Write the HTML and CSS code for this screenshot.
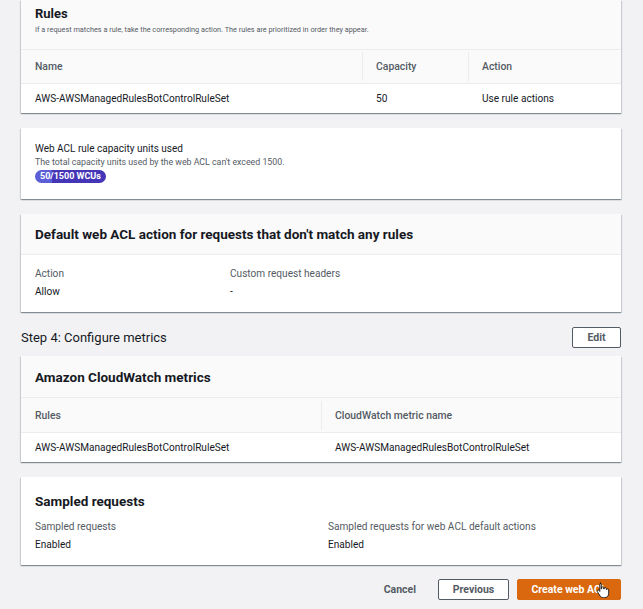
FILE: index.html
```html
<!DOCTYPE html>
<html lang="en">
<head>
<meta charset="utf-8">
<title>Review and create web ACL</title>
<link rel="stylesheet" href="styles.css">
</head>
<body>
<main class="page">
  <section class="card card-first">
    <header class="card-header">
      <h2 class="title">Rules</h2>
      <p class="desc">If a request matches a rule, take the corresponding action. The rules are prioritized in order they appear.</p>
    </header>
    <div class="table">
      <div class="row head rules-cols">
        <div class="cell">Name</div>
        <div class="cell sep">Capacity</div>
        <div class="cell sep">Action</div>
      </div>
      <div class="row rules-cols">
        <div class="cell">AWS-AWSManagedRulesBotControlRuleSet</div>
        <div class="cell">50</div>
        <div class="cell">Use rule actions</div>
      </div>
    </div>
  </section>

  <section class="card wcu">
    <div class="wcu-title">Web ACL rule capacity units used</div>
    <div class="wcu-desc">The total capacity units used by the web ACL can't exceed 1500.</div>
    <span class="badge">50/1500 WCUs</span>
  </section>

  <section class="card">
    <header class="card-header simple short">
      <h2 class="title big">Default web ACL action for requests that don't match any rules</h2>
    </header>
    <div class="kv two-def">
      <div class="kv-item">
        <div class="label">Action</div>
        <div class="value">Allow</div>
      </div>
      <div class="kv-item">
        <div class="label">Custom request headers</div>
        <div class="value">-</div>
      </div>
    </div>
  </section>

  <div class="step">
    <h3 class="step-title">Step 4: Configure metrics</h3>
    <button class="btn btn-normal">Edit</button>
  </div>

  <section class="card">
    <header class="card-header simple">
      <h2 class="title big">Amazon CloudWatch metrics</h2>
    </header>
    <div class="table">
      <div class="row head tall cw-cols">
        <div class="cell">Rules</div>
        <div class="cell sep">CloudWatch metric name</div>
      </div>
      <div class="row cw-cols">
        <div class="cell">AWS-AWSManagedRulesBotControlRuleSet</div>
        <div class="cell">AWS-AWSManagedRulesBotControlRuleSet</div>
      </div>
    </div>
  </section>

  <section class="card sampled">
    <h2 class="title big">Sampled requests</h2>
    <div class="kv two-half">
      <div class="kv-item">
        <div class="label">Sampled requests</div>
        <div class="value">Enabled</div>
      </div>
      <div class="kv-item">
        <div class="label">Sampled requests for web ACL default actions</div>
        <div class="value">Enabled</div>
      </div>
    </div>
  </section>

  <div class="actions">
    <button class="btn btn-link">Cancel</button>
    <button class="btn btn-normal">Previous</button>
    <button class="btn btn-primary">Create web ACL
      <svg class="cursor" width="14" height="16" viewBox="0 0 14 16" aria-hidden="true">
        <path d="M4 1.2c.7 0 1.2.5 1.2 1.2V7l.4-.1V5.8c0-.6.5-1 1.1-1s1.1.4 1.1 1V7l.3.1v-.6c0-.6.5-1 1.1-1s1.1.4 1.1 1v1l.3.1c.1-.4.5-.7 1-.7.6 0 1.1.5 1.1 1.1v3.4c0 2.5-1.800 4.3-4.2 4.3H7.2c-1.3 0-2.3-.6-3-1.6L1.3 9.6c-.3-.5-.2-1.1.3-1.4.5-.3 1.1-.2 1.4.2l.8 1.1V2.4c0-.7.5-1.2 1.2-1.200z" fill="#fff" stroke="#111" stroke-width="0.9" stroke-linejoin="round"/>
      </svg>
    </button>
  </div>
</main>
</body>
</html>
```
FILE: styles.css
```css
* { box-sizing: border-box; }
html, body { margin: 0; padding: 0; }
body {
  background: #f2f2f4;
  font-family: Roboto, "Liberation Sans", Arial, sans-serif;
  color: #16191f;
  font-size: 10.1px;
}
.page {
  width: 600px;
  margin-left: 21px;
  display: flex;
  flex-direction: column;
}
.card {
  background: #fff;
  box-shadow: 0 1px 1px rgba(0, 28, 36, 0.3), 1px 1px 1px rgba(0, 28, 36, 0.12), -1px 1px 1px rgba(0, 28, 36, 0.12);
  margin-bottom: 15px;
}
.card-header {
  background: #fafafb;
  border-bottom: 1px solid #eaeded;
}
.card-first .card-header {
  padding: 5px 14px 0;
  height: 50px;
}
.title {
  margin: 0;
  font-size: 13px;
  font-weight: 700;
  line-height: 18px;
}
.title.big { font-size: 13.5px; }
.desc {
  margin: 0;
  font-size: 7.3px;
  line-height: 14px;
  color: #545b64;
}
.card-header.simple {
  height: 42px;
  padding: 0 14px;
  display: flex;
  align-items: center;
}
.card-header.simple.short { height: 41px; }
.table { display: flex; flex-direction: column; }
.row { display: grid; align-items: center; }
.rules-cols { grid-template-columns: 341px 106px 1fr; }
.cw-cols { grid-template-columns: 300px 1fr; }
.row.head {
  height: 34px;
  background: #fafafb;
  border-bottom: 1px solid #eaeded;
  font-weight: 500;
  font-size: 10.4px;
  color: #545b64;
}
.row.head.tall { height: 35px; }
.row:not(.head) { height: 29px; }
.cell { padding: 0 14px; white-space: nowrap; }
.cell.sep { position: relative; }
.cell.sep::before {
  content: "";
  position: absolute;
  left: 0;
  top: -8px;
  bottom: -8px;
  border-left: 1px solid #eaeded;
}
.wcu {
  padding: 14px 14px 15px;
  height: 71px;
}
.wcu-title { font-size: 10px; line-height: 14px; }
.wcu-desc { font-size: 8.8px; line-height: 12px; color: #545b64; }
.badge {
  display: inline-block;
  margin-top: 2px;
  height: 13px;
  line-height: 13px;
  padding: 0 5px;
  border-radius: 7px;
  font-size: 9px;
  font-weight: 700;
  color: #fff;
  background: linear-gradient(to right, #5b5ed6 0 24%, #4436b6 24%);
}
.kv {
  display: grid;
  padding: 10px 14px 11px;
}
.two-def { grid-template-columns: 195px 1fr; }
.two-half { grid-template-columns: 293px 1fr; padding: 8px 0 10px; }
.label { color: #545b64; line-height: 18px; }
.value { line-height: 18px; }
.step {
  display: flex;
  align-items: center;
  justify-content: space-between;
  height: 21px;
  margin: 0 0 8px;
}
.step-title {
  margin: 0;
  font-size: 13px;
  font-weight: 400;
}
.btn {
  font-family: inherit;
  font-weight: 700;
  font-size: 10.5px;
  height: 21px;
  border-radius: 2px;
  padding: 0 12px;
  cursor: pointer;
}
.btn-normal {
  background: #fff;
  color: #545b64;
  border: 1px solid #545b64;
}
.step .btn-normal { width: 49px; padding: 0; }
.sampled {
  padding: 15px 14px 10px;
  height: 88px;
}
.actions {
  display: flex;
  justify-content: flex-end;
  align-items: center;
  gap: 8px;
  margin-top: -1px;
}
.btn-link {
  background: none;
  border: none;
  color: #545b64;
  margin-right: 2px;
}
.btn-primary {
  position: relative;
  background: #d9680e;
  border: 1px solid #d9680e;
  color: #fff;
  width: 104px;
}
.actions .btn-normal { width: 71px; padding: 0; }
.cursor {
  position: absolute;
  left: 78px;
  top: 2px;
}
```
